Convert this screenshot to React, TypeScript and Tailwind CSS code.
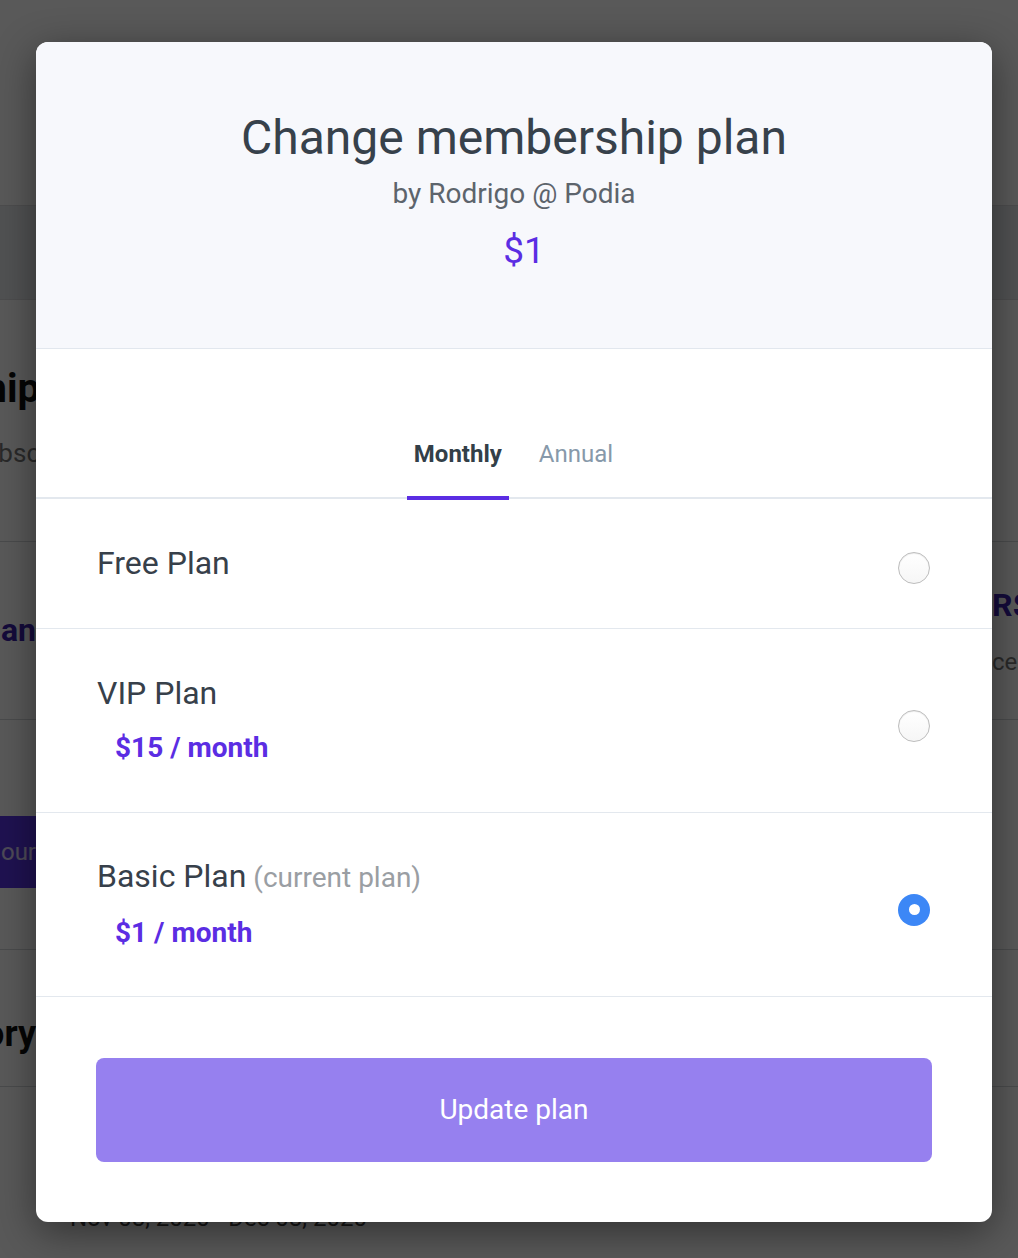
import React from "react";

const font = { fontFamily: "Roboto, 'Noto Sans', Arial, sans-serif" };

function Radio({ checked }: { checked?: boolean }) {
  if (checked) {
    return (
      <div className="w-[32px] h-[32px] rounded-full bg-[#3c87f6] flex items-center justify-center shrink-0">
        <div className="w-[11px] h-[11px] rounded-full bg-white" />
      </div>
    );
  }
  return (
    <div className="w-[32px] h-[32px] rounded-full border-[1.5px] border-[#bdbdbd] bg-gradient-to-b from-white to-[#f6f6f6] shadow-[inset_0_1px_1px_rgba(0,0,0,0.08)] shrink-0" />
  );
}

function PlanRow({
  name,
  note,
  price,
  checked,
  tall,
}: {
  name: string;
  note?: string;
  price?: string;
  checked?: boolean;
  tall?: boolean;
}) {
  return (
    <div
      className={`flex items-center justify-between pl-[61px] pr-[62px] border-b border-[#e3e8ee] ${
        tall ? "h-[184px]" : "h-[130px]"
      }`}
    >
      <div className={`flex flex-col ${tall ? "pb-[4px]" : "pb-[2px]"}`}>
        <div className="text-[32px] leading-[36px] text-[#37404a]">
          {name}
          {note && <span className="text-[28px] text-[#9a9ea3]"> {note}</span>}
        </div>
        {price && (
          <div className="mt-[22px] ml-[18px] text-[28px] leading-[30px] font-bold text-[#5b2de3]">
            {price}
          </div>
        )}
      </div>
      <div className={tall ? "mt-[10px]" : "mt-[8px]"}>
        <Radio checked={checked} />
      </div>
    </div>
  );
}

export default function App() {
  return (
    <div className="relative w-[1018px] h-[1258px] overflow-hidden bg-white" style={font}>
      {/* Background page */}
      <div className="flex flex-col h-full">
        <div className="h-[205px]" />
        <div className="h-[95px] bg-[#e9ebee] border-y border-[#dcdde0]" />
        <div className="flex h-[242px] border-b border-[#d5d7da]">
          <div className="w-[40px] overflow-hidden flex flex-col items-end pt-[64px]">
            <div className="whitespace-nowrap text-[40px] leading-[50px] font-bold text-[#111]">Membership</div>
            <div className="whitespace-nowrap text-[26px] leading-[30px] text-[#777] mt-[24px]">Subsc</div>
          </div>
        </div>
        <div className="flex h-[178px] border-b border-[#d5d7da]">
          <div className="w-[36px] overflow-hidden flex flex-col items-end pt-[68px]">
            <div className="whitespace-nowrap text-[32px] leading-[40px] font-bold text-[#3b22a8]">Plan</div>
          </div>
          <div className="flex-1" />
          <div className="w-[26px] overflow-hidden pt-[44px]">
            <div className="whitespace-nowrap text-[32px] leading-[38px] font-bold text-[#3b22a8]">R$</div>
            <div className="whitespace-nowrap text-[24px] leading-[30px] text-[#777] mt-[23px]">cer</div>
          </div>
        </div>
        <div className="flex h-[230px] border-b border-[#d5d7da]">
          <div className="w-[36px] pt-[96px]">
            <div className="h-[72px] bg-[#5a34e8] overflow-hidden flex items-center justify-end">
              <span className="whitespace-nowrap text-[24px] text-white/80">our</span>
            </div>
          </div>
        </div>
        <div className="flex h-[137px] border-b border-[#d5d7da]">
          <div className="w-[36px] overflow-hidden flex flex-col items-end pt-[64px]">
            <div className="whitespace-nowrap text-[36px] leading-[40px] font-bold text-[#111]">History</div>
          </div>
        </div>
        <div className="pl-[70px] pt-[116px] text-[24px] leading-[30px] text-[#444] whitespace-nowrap">
          Nov 08, 2020 - Dec 08, 2020
        </div>
      </div>

      {/* Overlay */}
      <div className="absolute inset-0 bg-black/[0.65]" />

      {/* Modal */}
      <div className="absolute left-[36px] top-[42px] w-[956px] h-[1180px] rounded-[12px] bg-white overflow-hidden shadow-[0_10px_40px_rgba(0,0,0,0.45)] flex flex-col">
        <div className="h-[307px] bg-[#f7f8fc] border-b border-[#e2e7ee] flex flex-col items-center pt-[67px] shrink-0">
          <div className="text-[48px] leading-[58px] text-[#37414b]">Change membership plan</div>
          <div className="text-[28px] leading-[32px] text-[#5d646c] mt-[11px]">by Rodrigo @ Podia</div>
          <div className="text-[37px] leading-[44px] text-[#5b2de3] mt-[19px] pl-[20px]">$1</div>
        </div>
        <div className="h-[150px] border-b-[2px] border-[#e3e8ee] flex justify-center items-end gap-[30px] pr-[8px] shrink-0">
          <div className="px-[7px] pb-[28px] border-b-[4px] border-[#5b2de3] mb-[-3px] text-[24px] leading-[28px] font-bold text-[#333f48]">
            Monthly
          </div>
          <div className="pb-[29px] text-[24px] leading-[28px] text-[#8799aa]">Annual</div>
        </div>
        <PlanRow name="Free Plan" />
        <PlanRow name="VIP Plan" price="$15 / month" tall />
        <PlanRow name="Basic Plan" note="(current plan)" price="$1 / month" checked tall />
        <div className="px-[60px] pt-[61px]">
          <button className="w-full h-[104px] rounded-[8px] bg-[#9680ef] text-white text-[28px]">
            Update plan
          </button>
        </div>
      </div>
    </div>
  );
}
